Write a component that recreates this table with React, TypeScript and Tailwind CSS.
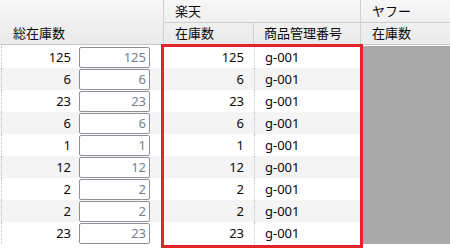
import React from "react";

const rows = [125, 6, 23, 6, 1, 12, 2, 2, 23];

export default function App() {
  return (
    <div
      className="relative w-[450px] h-[249px] overflow-hidden bg-white text-[13px] text-[#0a0a0a]"
      style={{ fontFamily: '"Noto Sans", "Noto Sans CJK JP", sans-serif' }}
    >
      {/* header */}
      <div className="flex h-[45px] border-b border-[#c9c9c9] bg-gradient-to-b from-[#f7f7f7] to-[#eaeaea]">
        <div className="w-[164px] shrink-0 border-r border-[#cfcfcf] flex flex-col">
          <div className="h-[23px]" />
          <div className="h-[21px] flex items-center pl-[13px] leading-none">総在庫数</div>
        </div>
        <div className="w-[197px] shrink-0 border-r border-[#cfcfcf] flex flex-col">
          <div className="h-[23px] border-b border-[#cfcfcf] flex items-center pl-[11px] leading-none">楽天</div>
          <div className="flex h-[21px]">
            <div className="w-[90px] border-r border-[#cfcfcf] flex items-center pl-[11px] leading-none">在庫数</div>
            <div className="flex-1 flex items-center pl-[10px] leading-none">商品管理番号</div>
          </div>
        </div>
        <div className="flex-1 flex flex-col">
          <div className="h-[23px] border-b border-[#cfcfcf] flex items-center pl-[11px] leading-none">ヤフー</div>
          <div className="h-[21px] flex items-center pl-[11px] leading-none">在庫数</div>
        </div>
      </div>

      {/* rows */}
      <div className="pt-[1px]">
        {rows.map((n, i) => (
          <div key={i} className={`flex h-[22px] ${i % 2 === 1 ? "bg-[#f4f4f4]" : "bg-white"}`}>
            <div className="w-[164px] shrink-0 flex items-start border-l border-dotted border-[#bdbdbd] ml-[1px]">
              <div className="w-[69px] h-[22px] flex items-center justify-end leading-none">{n}</div>
              <div className="ml-[8px] mt-[1px] w-[71px] h-[21px] border border-[#8f8f99] rounded-[2px] bg-white flex items-center justify-end pr-[3px] text-[#76808c] leading-none">
                {n}
              </div>
            </div>
            <div className="w-[90px] shrink-0 border-r border-dotted border-[#c4c4c4] flex items-center justify-end pr-[10px] leading-none">
              {n}
            </div>
            <div className="w-[107px] shrink-0 flex items-center pl-[10px] leading-none">g-001</div>
            <div className="flex-1 bg-[#a9a9a9]" />
          </div>
        ))}
      </div>

      {/* selection outline */}
      <div className="absolute left-[161px] top-[44px] w-[202px] h-[204px] border-[3px] border-[#e4222c] pointer-events-none" />
    </div>
  );
}
